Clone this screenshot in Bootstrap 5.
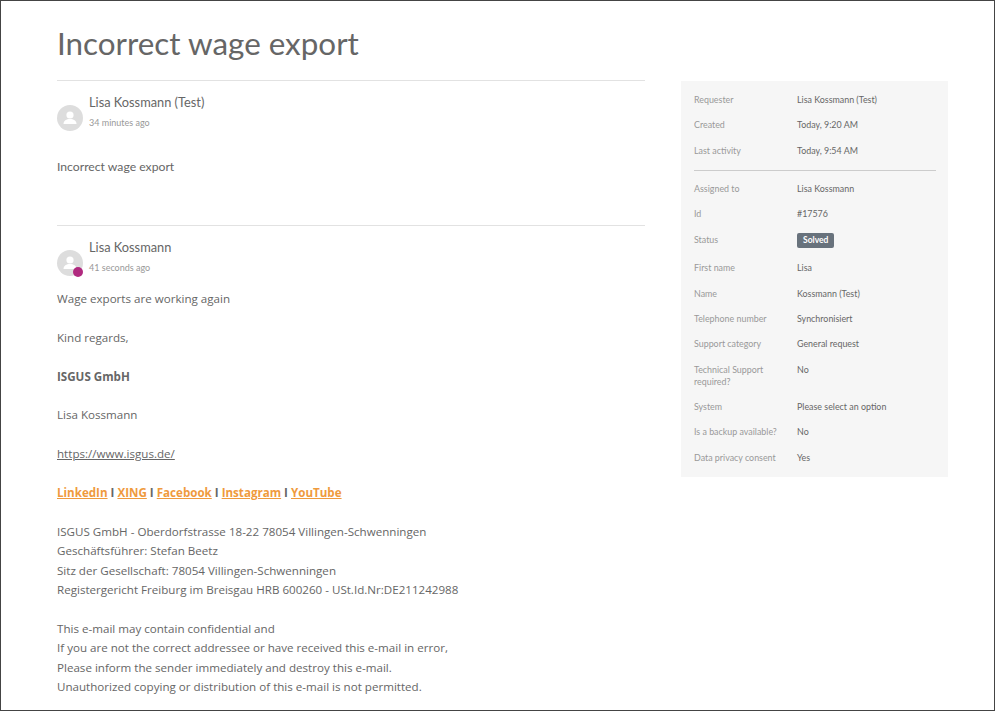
<!doctype html>
<html lang="en">
<head>
<meta charset="utf-8">
<title>Incorrect wage export</title>
<link href="https://cdn.jsdelivr.net/npm/bootstrap@5.3.0/dist/css/bootstrap.min.css" rel="stylesheet">
<style>
html,body{height:100%;margin:0;overflow:hidden;background:#fff}
body{font-family:"Open Sans","Liberation Sans",sans-serif;color:#666;font-size:11.6px;line-height:19.4px}
.frame{height:711px;border:1px solid #444;overflow:hidden;padding:0 46px 0 56px}
.page-title{font-family:"Lato",sans-serif;font-size:31.4px;line-height:38px;font-weight:400;color:#666;margin:0;padding-top:23px;height:79px}
.main-col{width:588px;flex:none}
.side-col{width:267px;flex:none;margin-left:36px;padding-top:1px}
.post{border-top:1px solid #e2e2e2}
.post-first{height:145px;padding-top:13px}
.post-second{padding-top:13px}
.avatar{width:26px;height:26px;border-radius:50%;background:#ddd;flex:none;position:relative;margin-top:11px}
.avatar svg{display:block;width:26px;height:26px}
.dot{position:absolute;right:0;bottom:-1px;width:10px;height:10px;border-radius:50%;background:#b02a7f}
.who{margin-left:6px}
.who-name{font-family:"Lato",sans-serif;font-size:12.8px;line-height:16px;color:#666}
.who-time{font-family:"Lato",sans-serif;font-size:9px;line-height:12px;color:#999;margin-top:6.5px}
.first-body{margin-top:26px;font-family:"Lato",sans-serif;font-size:12.2px}
.second-body{margin-top:13px}
.second-body p{margin:0 0 19.4px}
.second-body a{color:#666}
.second-body .social{font-weight:700;color:#666}
.second-body .social a{color:#ef9a3d}
.panel{background:#f6f6f6;padding:13px 12px 0 13px;height:396px;font-family:"Lato",sans-serif;font-size:8.9px;line-height:12px}
.meta-row{display:flex;margin-bottom:13.3px}
.meta-key{width:103px;flex:none;color:#999;padding-right:10px}
.meta-val{color:#666}
.panel hr{margin:1px 0 12px;border-top:1px solid #ccc;opacity:1}
.state{display:inline-block;background:#68727c;color:#fff;font-weight:700;border-radius:2px;padding:2px 6px;line-height:11px;font-size:8.5px}
.state-row{margin-bottom:14px}
.state-row .meta-key{padding-top:1px}
</style>
</head>
<body>
<div class="frame">
  <h1 class="page-title">Incorrect wage export</h1>
  <div class="d-flex">
    <div class="main-col">
      <section class="post post-first">
        <div class="d-flex">
          <div class="avatar"><svg viewBox="0 0 26 26"><circle cx="13" cy="10" r="3.6" fill="#fff"/><path d="M6.5 19c0-3.4 2.9-5 6.5-5s6.500 1.600 6.500 5z" fill="#fff"/></svg></div>
          <div class="who"><div class="who-name">Lisa Kossmann (Test)</div><div class="who-time">34 minutes ago</div></div>
        </div>
        <div class="first-body">Incorrect wage export</div>
      </section>
      <section class="post post-second">
        <div class="d-flex">
          <div class="avatar"><svg viewBox="0 0 26 26"><circle cx="13" cy="10" r="3.6" fill="#fff"/><path d="M6.5 19c0-3.4 2.9-5 6.5-5s6.500 1.600 6.500 5z" fill="#fff"/></svg><span class="dot"></span></div>
          <div class="who"><div class="who-name">Lisa Kossmann</div><div class="who-time">41 seconds ago</div></div>
        </div>
        <div class="second-body">
          <p>Wage exports are working again</p>
          <p>Kind regards,</p>
          <p><strong>ISGUS GmbH</strong></p>
          <p>Lisa Kossmann</p>
          <p><a href="#">https://www.isgus.de/</a></p>
          <p class="social"><a href="#">LinkedIn</a> I <a href="#">XING</a> I <a href="#">Facebook</a> I <a href="#">Instagram</a> I <a href="#">YouTube</a></p>
          <p>ISGUS GmbH - Oberdorfstrasse 18-22 78054 Villingen-Schwenningen<br>Geschäftsführer: Stefan Beetz<br>Sitz der Gesellschaft: 78054 Villingen-Schwenningen<br>Registergericht Freiburg im Breisgau HRB 600260 - USt.Id.Nr:DE211242988</p>
          <p>This e-mail may contain confidential and<br>If you are not the correct addressee or have received this e-mail in error,<br>Please inform the sender immediately and destroy this e-mail.<br>Unauthorized copying or distribution of this e-mail is not permitted.</p>
        </div>
      </section>
    </div>
    <aside class="side-col">
      <div class="panel">
        <div class="meta-row"><div class="meta-key">Requester</div><div class="meta-val">Lisa Kossmann (Test)</div></div>
        <div class="meta-row"><div class="meta-key">Created</div><div class="meta-val">Today, 9:20 AM</div></div>
        <div class="meta-row"><div class="meta-key">Last activity</div><div class="meta-val">Today, 9:54 AM</div></div>
        <hr>
        <div class="meta-row"><div class="meta-key">Assigned to</div><div class="meta-val">Lisa Kossmann</div></div>
        <div class="meta-row"><div class="meta-key">Id</div><div class="meta-val">#17576</div></div>
        <div class="meta-row state-row"><div class="meta-key">Status</div><div class="meta-val"><span class="state">Solved</span></div></div>
        <div class="meta-row"><div class="meta-key">First name</div><div class="meta-val">Lisa</div></div>
        <div class="meta-row"><div class="meta-key">Name</div><div class="meta-val">Kossmann (Test)</div></div>
        <div class="meta-row"><div class="meta-key">Telephone number</div><div class="meta-val">Synchronisiert</div></div>
        <div class="meta-row"><div class="meta-key">Support category</div><div class="meta-val">General request</div></div>
        <div class="meta-row"><div class="meta-key">Technical Support required?</div><div class="meta-val">No</div></div>
        <div class="meta-row"><div class="meta-key">System</div><div class="meta-val">Please select an option</div></div>
        <div class="meta-row"><div class="meta-key">Is a backup available?</div><div class="meta-val">No</div></div>
        <div class="meta-row"><div class="meta-key">Data privacy consent</div><div class="meta-val">Yes</div></div>
      </div>
    </aside>
  </div>
</div>
<script src="https://cdn.jsdelivr.net/npm/bootstrap@5.3.0/dist/js/bootstrap.bundle.min.js"></script>
</body>
</html>
